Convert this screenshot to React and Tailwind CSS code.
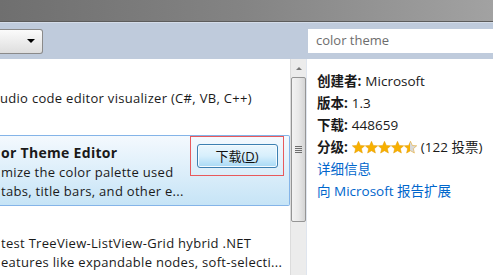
import React from "react";

const font = "font-['Open_Sans','Noto_Sans_CJK_SC',sans-serif]";

const Star = ({ fill = 1 }) => (
  <svg width="13" height="13" viewBox="1 1 22 22" className="shrink-0">
    <defs>
      <linearGradient id={`s${fill}`} x1="0" x2="1" y1="0" y2="0">
        <stop offset={fill} stopColor="#f7b000" />
        <stop offset={fill} stopColor="#d9d9d9" />
      </linearGradient>
    </defs>
    <path
      d="M12 1.5l3.1 7 7.4.6-5.6 4.9 1.7 7.4L12 17.5l-6.6 3.9 1.7-7.4L1.5 9.1l7.4-.6z"
      fill={`url(#s${fill})`}
      stroke="#e39a00"
      strokeWidth="0.8"
    />
  </svg>
);

const Info = ({ label, children }) => (
  <div className="flex items-center h-[22px] whitespace-nowrap">
    <span className="font-bold">{label}:</span>
    <span className="ml-1 flex items-center">{children}</span>
  </div>
);

export default function App() {
  return (
    <div className={`w-[493px] h-[276px] overflow-hidden bg-white text-[#1a1a1a] ${font}`}>
      {/* window frame */}
      <div className="h-[22px] bg-gradient-to-r from-[#6f6f6f] via-[#848484] to-[#a2a2a2] border-b border-[#5c5c5c]" />

      {/* toolbar */}
      <div className="h-[37px] bg-[#bfcbdc] border-t border-[#d4dce8] flex items-center justify-between">
        <div className="w-[43px] h-[25px] rounded-r-[3px] border border-l-0 border-[#8a8a8a] bg-gradient-to-b from-[#fbfbfb] to-[#dedede] flex items-center justify-end pr-[7px]">
          <span className="w-0 h-0 border-l-[4px] border-r-[4px] border-t-[4px] border-l-transparent border-r-transparent border-t-black" />
        </div>
        <div className="w-[185px] h-[24px] bg-white flex items-center pl-[8px] text-[13px] text-[#6d6d6d]">
          color theme
        </div>
      </div>

      <div className="flex h-[216px]">
        {/* extension list */}
        <div className="w-[290px] overflow-hidden text-[13px] tracking-[0.3px] leading-[19px] whitespace-nowrap">
          <div className="h-[76px] pt-[30px]">udio code editor visualizer (C#, VB, C++)</div>

          <div className="h-[71px] border border-l-0 border-[#84b4e8] rounded-r-[2px] bg-gradient-to-b from-[#f4f9fe] to-[#c6e4f6] flex">
            <div className="flex-1 pl-[1px] pt-[6px]">
              <div className="text-[14px] tracking-[0.3px] font-bold leading-[21px]">or Theme Editor</div>
              <div>mize the color palette used</div>
              <div>tabs, title bars, and other e...</div>
            </div>
            <div className="w-[94px] h-[40px] mr-[5px] border border-[#e8595c] flex items-center justify-center tracking-normal">
              <button className="w-[81px] h-[24px] rounded-[3px] border border-[#3c7fb1] bg-gradient-to-b from-[#eaf6fd] via-[#d7effc] to-[#a7d9f5] shadow-[inset_0_0_0_1px_#f5fbfe] text-[13px] text-[#111] flex items-center justify-center">
                下载(<span className="underline">D</span>)
              </button>
            </div>
          </div>

          <div className="pt-[28px] pl-[1px]">
            <div>test TreeView-ListView-Grid hybrid .NET</div>
            <div>eatures like expandable nodes, soft-selecti...</div>
          </div>
        </div>

        {/* scrollbar */}
        <div className="w-[17px] bg-[#ececec] border-l border-[#dcdcdc] border-r border-r-[#dfe5ee] flex flex-col items-center">
          <div className="h-[18px] flex items-center justify-center">
            <span className="w-0 h-0 border-l-[3px] border-r-[3px] border-b-[3px] border-l-transparent border-r-transparent border-b-[#777]" />
          </div>
          <div className="w-[15px] h-[145px] rounded-[2px] border border-[#959595] bg-gradient-to-r from-[#f3f3f3] via-[#e9e9e9] to-[#d4d4d4] flex flex-col items-center justify-center gap-[1px]">
            <span className="w-[7px] h-[1px] bg-[#6e6e6e]" />
            <span className="w-[7px] h-[1px] bg-[#6e6e6e]" />
            <span className="w-[7px] h-[1px] bg-[#6e6e6e]" />
            <span className="w-[7px] h-[1px] bg-[#6e6e6e]" />
          </div>
        </div>

        {/* details */}
        <div className="flex-1 pl-[10px] pt-[11px] text-[13.5px]">
          <Info label="创建者">Microsoft</Info>
          <Info label="版本">1.3</Info>
          <Info label="下载">448659</Info>
          <Info label="分级">
            <span className="flex mr-[4px]">
              <Star />
              <Star />
              <Star />
              <Star />
              <Star fill={0.5} />
            </span>
            (122 投票)
          </Info>
          <div className="h-[22px] flex items-center text-[#0066cc]">详细信息</div>
          <div className="h-[22px] flex items-center text-[#0066cc] whitespace-nowrap">向 Microsoft 报告扩展</div>
        </div>
      </div>
    </div>
  );
}
